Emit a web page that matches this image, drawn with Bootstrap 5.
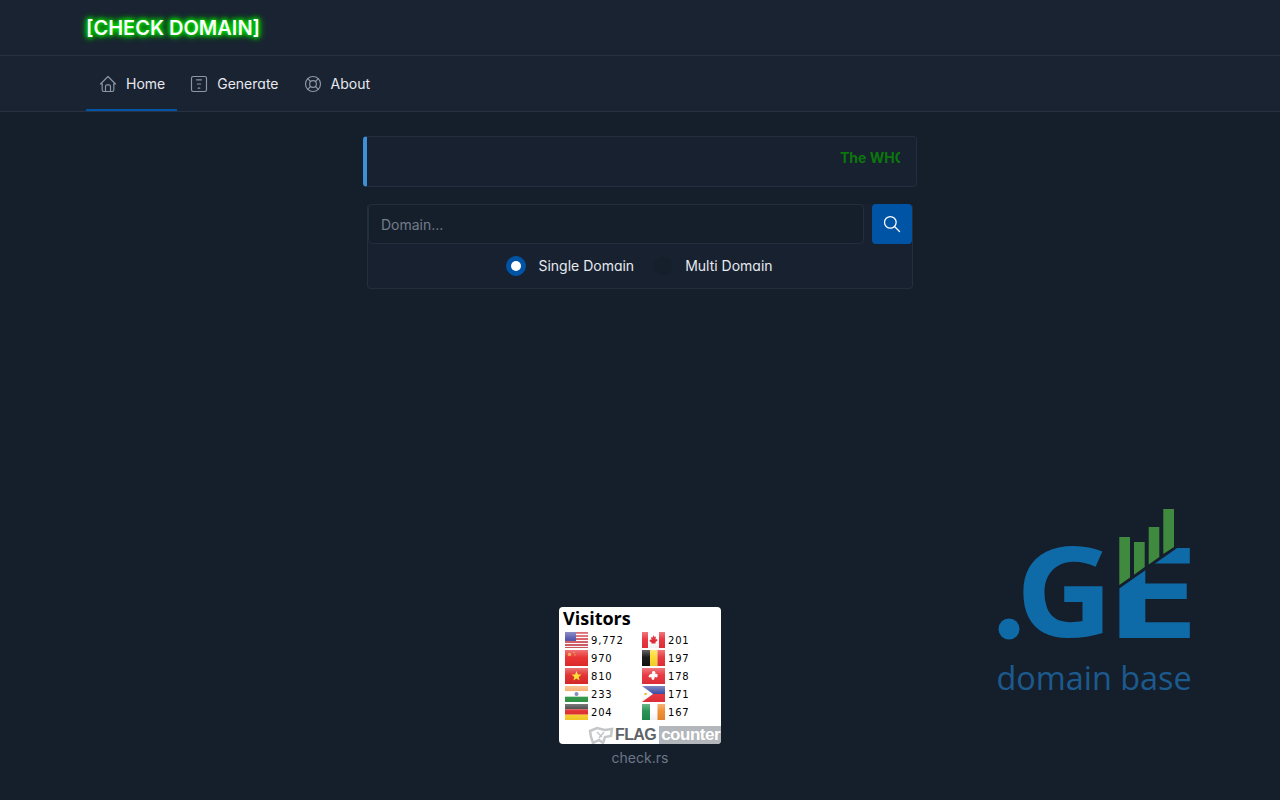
<!DOCTYPE html>
<html lang="en">
<head>
    <meta charset="UTF-8">
    <meta name="viewport" content="width=device-width, initial-scale=1.0">
    <title>Check Domain</title>
    <link href="https://cdn.jsdelivr.net/npm/bootstrap@5.3.0/dist/css/bootstrap.min.css" rel="stylesheet">
    <style>
        body { background: #151f2c; color: #e6e9ee; font-family: Inter, "Liberation Sans", sans-serif; font-feature-settings: "cv11"; font-size: 14px; min-height: 800px; display: flex; flex-direction: column; }
        .top-bar { background: #1a2332; height: 56px; border-bottom: 1px solid #263244; }
        .menu-bar { background: #1a2332; height: 56px; border-bottom: 1px solid #263244; padding: 0; }
        .wrap-xl { max-width: 1140px; padding: 0 16px; margin: 0 auto; width: 100%; }
        .site-logo { color: #fff; font-size: 20px; font-weight: 600; line-height: 56px; text-shadow: 0 0 4px #00e000, 0 0 5px #00e000, 0 0 7px #00d000, 0 0 9px #00b000; white-space: nowrap; }
        .navbar-expand .navbar-nav .nav-link.menu-link { color: #e6e9ee; height: 55px; padding: 0 12px; display: flex; align-items: center; gap: 8px; font-size: 14px; }
        .navbar-expand .navbar-nav .nav-link.menu-link.active { box-shadow: inset 0 -2px 0 #0054a6; color: #e6e9ee; }
        .menu-bar svg { width: 20px; height: 20px; stroke: #8b96a6; fill: none; stroke-width: 1.4; stroke-linecap: round; stroke-linejoin: round; flex-shrink: 0; }
        .ticker-box { width: 554px; height: 51px; margin: 24px auto 0; background: #172130; border: 1px solid #222e3e; border-left: 4px solid #3d8fd6; border-radius: 4px; display: flex; justify-content: flex-end; align-items: center; padding: 0 16px 8px 0; }
        .ticker-text { width: 60px; overflow: hidden; white-space: nowrap; color: #0b770b; font-weight: 700; font-size: 14px; }
        .search-box { width: 546px; height: 85px; margin: 17px auto 0; background: #172130; border: 1px solid #222e3e; border-top: 0; border-radius: 4px; }
        .domain-input { width: 496px; height: 40px; background: #151f2c; border: 1px solid #222e3e; border-radius: 4px; color: #fff; font-size: 14px; padding: 0 12px; }
        .domain-input::placeholder { color: #727c8a; }
        .domain-input:focus { background: #151f2c; color: #fff; border-color: #222e3e; box-shadow: none; }
        .search-btn { width: 40px; height: 40px; background: #0054a6; border: 0; border-radius: 4px; padding: 0; display: flex; align-items: center; justify-content: center; }
        .search-btn:hover { background: #0054a6; }
        .search-btn svg { width: 20px; height: 20px; stroke: #fff; fill: none; stroke-width: 1.5; stroke-linecap: round; }
        .radio-row { height: 44px; gap: 19px; padding-right: 1px; }
        .radio-item { display: flex; align-items: center; gap: 12px; margin: 0; padding: 0; min-height: 0; }
        .radio-item .form-check-input { width: 20px; height: 20px; margin: 0; background-color: #151f2c; border: 1px solid #172130; float: none; }
        .radio-item .form-check-input:checked { background-color: #0054a6; border-color: #0054a6; background-size: 20px; }
        .radio-item .form-check-input:focus { box-shadow: none; }
        .radio-item label { color: #e6e9ee; position: relative; top: -1px; }
        .foot-grid { margin-top: auto; display: grid; grid-template-columns: 1fr 162px 1fr; padding-bottom: 34px; }
        .geo-logo { justify-self: end; align-self: start; margin: -102px 80px 0 0; width: 210px; height: 200px; display: block; }
        .visit-card { background: #fff; width: 162px; height: 137px; border-radius: 4px; color: #000; overflow: hidden; display: flex; flex-direction: column; }
        .visit-title { font-family: "Open Sans", sans-serif; font-weight: 700; font-size: 18px; line-height: 22px; padding-left: 4px; }
        .visit-grid { display: grid; grid-template-columns: 77px 1fr; grid-auto-rows: 18px; padding-left: 6px; margin-top: 2px; }
        .visit-cell { display: flex; align-items: center; gap: 3px; font-family: "DejaVu Sans", sans-serif; font-size: 10px; letter-spacing: .8px; }
        .visit-cell svg { width: 23px; height: 16px; flex-shrink: 0; }
        .visit-brand { margin-top: auto; display: flex; justify-content: flex-end; align-items: stretch; height: 18px; font-family: "Liberation Sans", sans-serif; font-weight: 700; }
        .brand-mark { width: 26px; height: 18px; margin-right: 1px; }
        .brand-flag { color: #5e6266; font-size: 16px; line-height: 18px; letter-spacing: -.6px; padding-right: 3px; }
        .brand-count { color: #fff; background: #b3b6ba; font-size: 17px; line-height: 18px; letter-spacing: -.5px; padding: 0 1px 0 2px; }
        .site-note { text-align: center; color: #6b7787; font-size: 14px; line-height: 17px; margin-top: 5px; }
    </style>
</head>
<body>
    <!-- блик поверх флагов -->
    <svg width="0" height="0" class="d-block"><defs><linearGradient id="gloss" x1="0" y1="0" x2="0" y2="1"><stop offset="0" stop-color="#fff" stop-opacity=".35"/><stop offset=".45" stop-color="#fff" stop-opacity=".05"/><stop offset="1" stop-color="#000" stop-opacity=".06"/></linearGradient></defs></svg>

    <header class="top-bar">
        <div class="wrap-xl"><div class="site-logo">[CHECK DOMAIN]</div></div>
    </header>
    <nav class="navbar navbar-expand menu-bar">
        <div class="wrap-xl d-flex">
            <ul class="navbar-nav d-flex flex-row">
                <li class="nav-item">
                    <a class="nav-link menu-link active" href="#">
                        <svg viewBox="0 0 24 24"><path d="M5 12H3l9-9 9 9h-2"/><path d="M5 12v7a2 2 0 0 0 2 2h10a2 2 0 0 0 2-2v-7"/><path d="M9 21v-6a2 2 0 0 1 2-2h2a2 2 0 0 1 2 2v6"/></svg>
                        Home
                    </a>
                </li>
                <li class="nav-item">
                    <a class="nav-link menu-link" href="#">
                        <svg viewBox="0 0 24 24"><rect x="3" y="3" width="18" height="18" rx="2"/><path d="M9 7h6M10 12h4M11 17h2"/></svg>
                        Generate
                    </a>
                </li>
                <li class="nav-item">
                    <a class="nav-link menu-link" href="#">
                        <svg viewBox="0 0 24 24"><circle cx="12" cy="12" r="9"/><circle cx="12" cy="12" r="4"/><path d="M15 15l3.350 3.350M9 15l-3.350 3.350M5.650 5.650L9 9M18.350 5.650L15 9"/></svg>
                        About
                    </a>
                </li>
            </ul>
        </div>
    </nav>

    <main>
        <div class="ticker-box"><div class="ticker-text">The WHOIS</div></div>
        <div class="search-box">
            <form class="d-flex justify-content-between" onsubmit="return false">
                <input class="form-control domain-input" type="text" placeholder="Domain...">
                <button class="btn search-btn" type="submit" aria-label="Search">
                    <svg viewBox="0 0 24 24"><circle cx="10" cy="10" r="7"/><path d="M21 21l-6-6"/></svg>
                </button>
            </form>
            <div class="d-flex justify-content-center align-items-center radio-row">
                <div class="form-check radio-item">
                    <input class="form-check-input" type="radio" name="mode" id="mode-single" checked>
                    <label for="mode-single">Single Domain</label>
                </div>
                <div class="form-check radio-item">
                    <input class="form-check-input" type="radio" name="mode" id="mode-multi">
                    <label for="mode-multi">Multi Domain</label>
                </div>
            </div>
        </div>
    </main>

    <footer class="foot-grid">
        <div></div>
        <div>
            <div class="visit-card">
                <div class="visit-title">Visitors</div>
                <div class="visit-grid">
                    <div class="visit-cell"><svg viewBox="0 0 23 16"><rect width="23" height="16" fill="#c8242f"/><path d="M0 2.500h23M0 5.500h23M0 8.500h23M0 11.500h23M0 14.500h23" stroke="#fff" stroke-width="1.400"/><rect width="11" height="9" fill="#5050a8"/><rect width="23" height="16" fill="url(#gloss)"/></svg>9,772</div>
                    <div class="visit-cell"><svg viewBox="0 0 23 16"><rect width="23" height="16" fill="#e8303a"/><rect x="6" width="11" height="16" fill="#fff"/><path d="M11.500 3l1 2 1.500-.5-.5 3 1.500-.5.5 1.500-2 1.500v1.500h-4V10.500l-2-1.500.5-1.500 1.500.5-.5-3 1.500.5z" fill="#e0252f"/><rect width="23" height="16" fill="url(#gloss)"/></svg>201</div>
                    <div class="visit-cell"><svg viewBox="0 0 23 16"><rect width="23" height="16" fill="#e82a2a"/><circle cx="4.500" cy="4.500" r="1.700" fill="#e9a03a"/><circle cx="9" cy="2.500" r=".7" fill="#e9a03a"/><circle cx="10" cy="5" r=".7" fill="#e9a03a"/><rect width="23" height="16" fill="url(#gloss)"/></svg>970</div>
                    <div class="visit-cell"><svg viewBox="0 0 23 16"><rect width="8" height="16" fill="#111"/><rect x="8" width="7.500" height="16" fill="#fdd92a"/><rect x="15.500" width="7.500" height="16" fill="#e8303a"/><rect width="23" height="16" fill="url(#gloss)"/></svg>197</div>
                    <div class="visit-cell"><svg viewBox="0 0 23 16"><rect width="23" height="16" fill="#e02a2a"/><path d="M11.500 3l1.400 3.400 3.600.2-2.800 2.300.9 3.500-3.100-1.900-3.100 1.900.9-3.500-2.800-2.300 3.600-.2z" fill="#fde02a"/><rect width="23" height="16" fill="url(#gloss)"/></svg>810</div>
                    <div class="visit-cell"><svg viewBox="0 0 23 16"><rect width="23" height="16" fill="#e8303a"/><path d="M11.500 3c2 0 2.500 2 1.500 3 2-1 3.500 1 2.500 2.500-.5 1.500-2.500 1-3 0 .5 2-.5 3.500-1.500 3.500s-2-1.500-1.500-3.500c-.5 1-2.500 1.500-3 0C7 7 8.500 5 10.500 6c-1-1-.5-3 1-3z" fill="#fff"/><rect width="23" height="16" fill="url(#gloss)"/></svg>178</div>
                    <div class="visit-cell"><svg viewBox="0 0 23 16"><rect width="23" height="5.300" fill="#f5a75c"/><rect y="5.300" width="23" height="5.400" fill="#fff"/><rect y="10.700" width="23" height="5.300" fill="#2f9a46"/><circle cx="11.500" cy="8" r="2" fill="#8088c0"/><rect width="23" height="16" fill="url(#gloss)"/></svg>233</div>
                    <div class="visit-cell"><svg viewBox="0 0 23 16"><rect width="23" height="8" fill="#3a48a0"/><rect y="8" width="23" height="8" fill="#e8303a"/><path d="M0 0l11 8-11 8z" fill="#fff"/><circle cx="3.500" cy="8" r="1.300" fill="#e8c030"/><rect width="23" height="16" fill="url(#gloss)"/></svg>171</div>
                    <div class="visit-cell"><svg viewBox="0 0 23 16"><rect width="23" height="5.300" fill="#333"/><rect y="5.300" width="23" height="5.400" fill="#e02a2a"/><rect y="10.700" width="23" height="5.300" fill="#fdd22a"/><rect width="23" height="16" fill="url(#gloss)"/></svg>204</div>
                    <div class="visit-cell"><svg viewBox="0 0 23 16"><rect width="8" height="16" fill="#1f8f4e"/><rect x="8" width="7.500" height="16" fill="#fff"/><rect x="15.500" width="7.500" height="16" fill="#f08a2c"/><rect width="23" height="16" fill="url(#gloss)"/></svg>167</div>
                </div>
                <div class="visit-brand">
                    <svg class="brand-mark" viewBox="0 0 26 18"><path d="M2 5l7-3 8 2 7-1-1 7-6 1-2 6-4-3-6 3-2-6z" fill="none" stroke="#c4c6c8" stroke-width="2.500"/><path d="M9 6l5 5M16 6l-5 6" stroke="#c4c6c8" stroke-width="1.500"/></svg>
                    <span class="brand-flag">FLAG</span><span class="brand-count">counter</span>
                </div>
            </div>
            <div class="site-note">check.rs</div>
        </div>
        <svg class="geo-logo" viewBox="990 505 210 200">
            <defs>
                <clipPath id="cut-e"><polygon points="1110,595 1200,532 1200,645 1110,645"/></clipPath>
            </defs>
            <circle cx="1009" cy="629" r="10.500" fill="#0f6aa8"/>
            <text transform="translate(1015.500 637) scale(1.080 1)" font-family="Open Sans" font-weight="700" font-size="125" fill="#0f6aa8">G</text>
            <g clip-path="url(#cut-e)">
                <text transform="translate(1104 638) scale(1.370 1)" font-family="Open Sans" font-weight="700" font-size="125" fill="#0f6aa8">E</text>
            </g>
            <g fill="#3f8a3f">
                <polygon points="1119.300,537 1130,537 1130,577.500 1119.300,585"/>
                <polygon points="1134,542 1144.700,542 1144.700,567 1134,574.700"/>
                <polygon points="1148.700,527 1159.300,527 1159.300,557 1148.700,564.400"/>
                <polygon points="1163.300,509 1174,509 1174,547 1163.300,554"/>
            </g>
            <text x="996.500" y="690" font-family="Open Sans" font-size="32.400" fill="#1c5a8e">domain base</text>
        </svg>
    </footer>

    <script src="https://cdn.jsdelivr.net/npm/bootstrap@5.3.0/dist/js/bootstrap.bundle.min.js"></script>
</body>
</html>
